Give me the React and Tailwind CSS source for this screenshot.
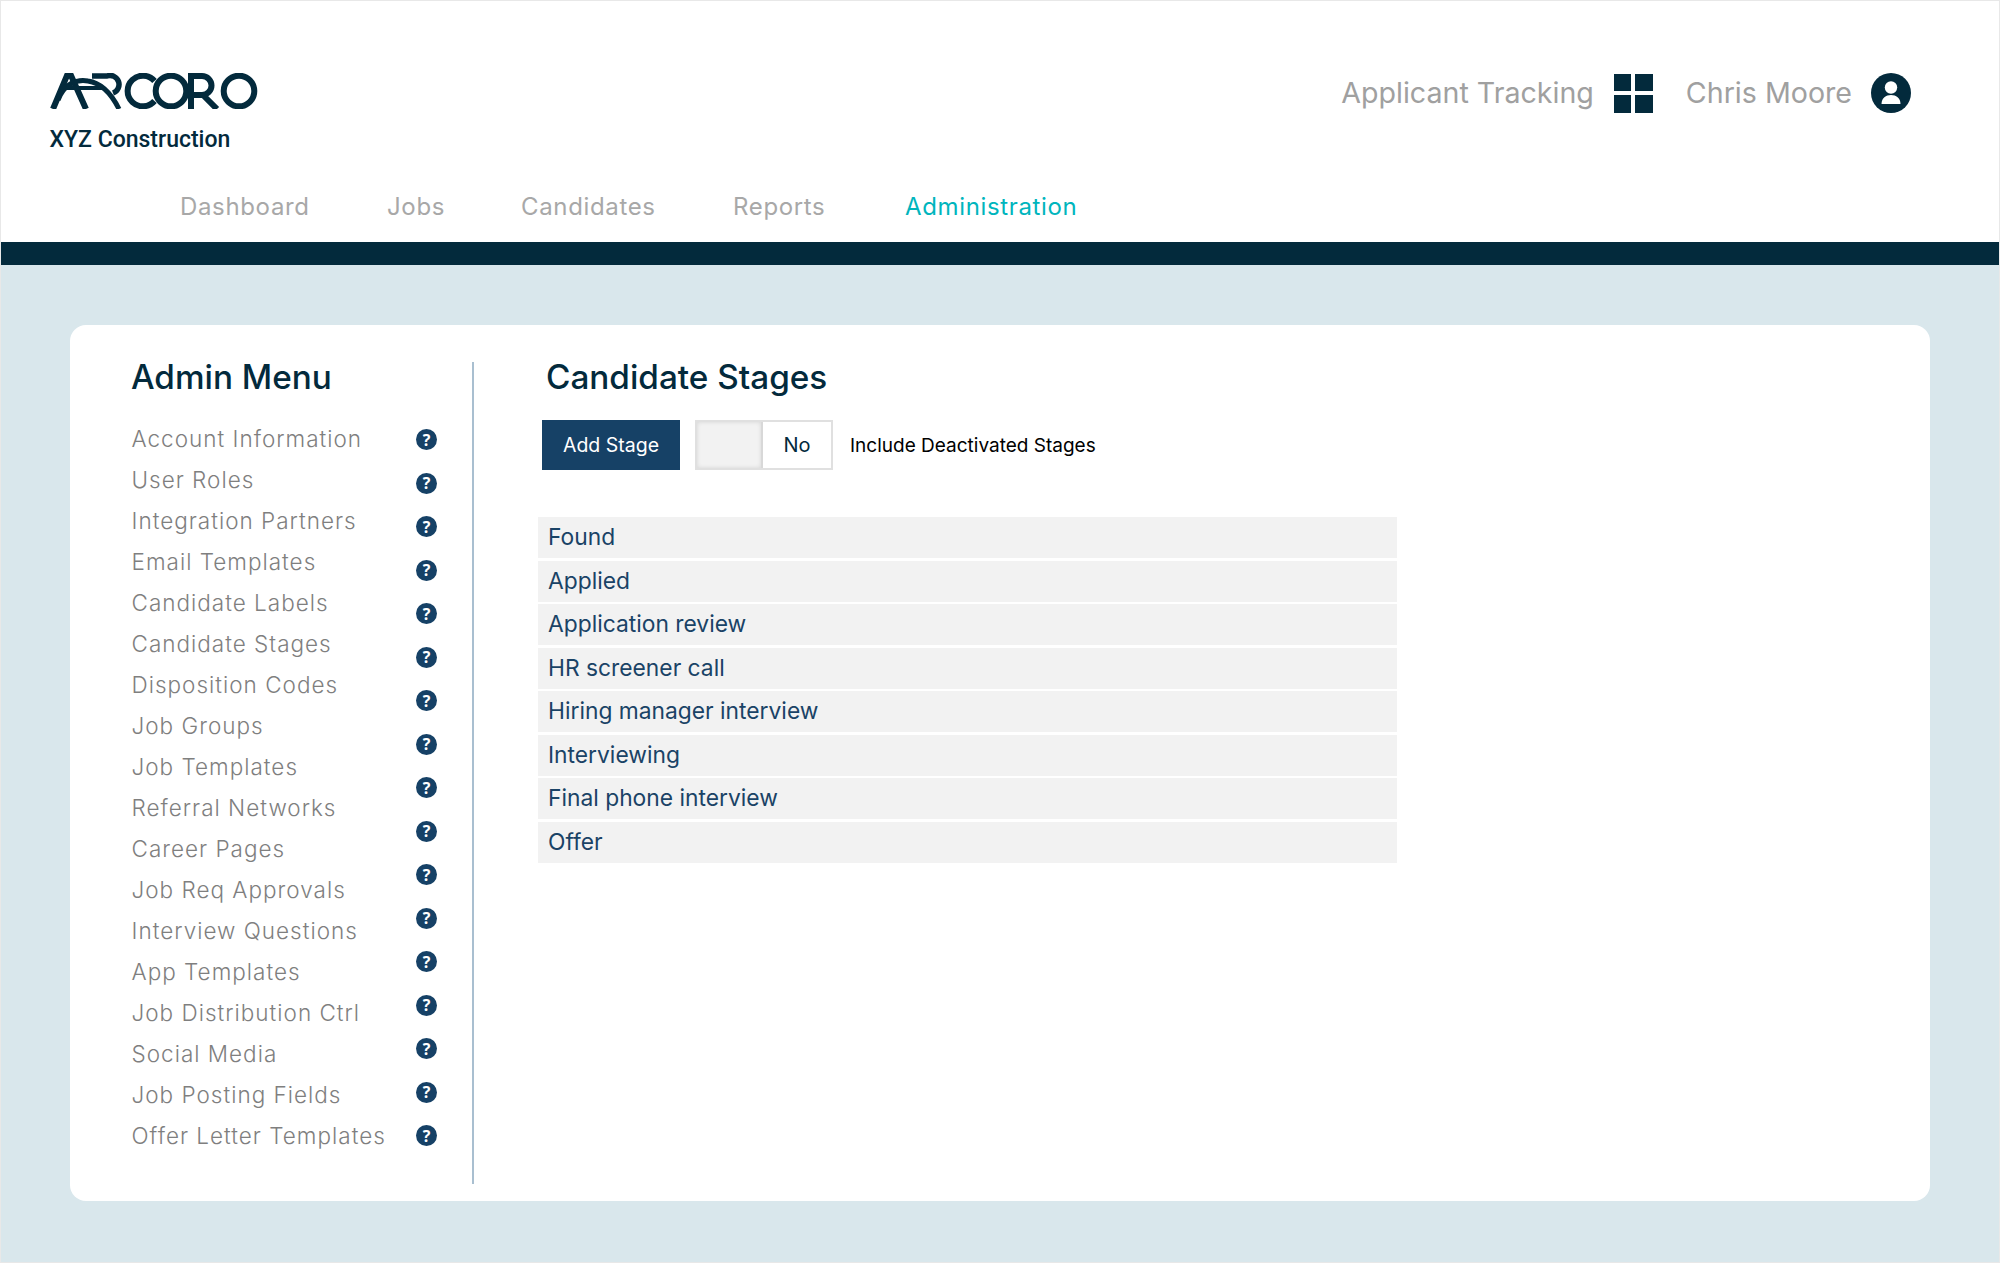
const menu = ["Account Information","User Roles","Integration Partners","Email Templates","Candidate Labels","Candidate Stages","Disposition Codes","Job Groups","Job Templates","Referral Networks","Career Pages","Job Req Approvals","Interview Questions","App Templates","Job Distribution Ctrl","Social Media","Job Posting Fields","Offer Letter Templates"];
const stages = ["Found","Applied","Application review","HR screener call","Hiring manager interview","Interviewing","Final phone interview","Offer"];
const nav = [["Dashboard","w-[207px]"],["Jobs","w-[134px]"],["Candidates","w-[212px]"],["Reports","w-[172px]"]];

function Logo() {
  return (
    <svg width="208" height="36" viewBox="0 0 208 36" fill="none" stroke="#032a3c" strokeWidth="6" aria-label="Arcoro">
      <path d="M3 36 L17 2.5 H21 L36 36" strokeWidth="6" />
      <path d="M13 15 H52" strokeWidth="4" />
      <path d="M8 27 C14 11 26 6 38 8 C52 10 62 22 69 36" strokeWidth="5" />
      <path d="M42 3 H57 A9 9 0 0 1 63 20" strokeWidth="5.5" />
      <path d="M104.5 8 A15.3 15.3 0 1 0 104.5 28" />
      <circle cx="121" cy="18" r="15.3" />
      <path d="M141 36 V3 H152 A9.5 9.5 0 0 1 152 22 H141 M152 21 L167 36" />
      <circle cx="189" cy="18" r="15.3" />
    </svg>
  );
}

function HelpDot() {
  return (
    <div className="w-[21px] h-[21px] rounded-full bg-[#164166] text-white flex items-center justify-center text-[16px] font-bold font-['Open_Sans',sans-serif] leading-none">?</div>
  );
}

export default function App() {
  return (
    <div className="w-[2000px] h-[1263px] overflow-hidden bg-[#d9e7ec] border border-[#e8e8e8] flex flex-col font-['Inter',sans-serif]">
      <header className="bg-white h-[241px] shrink-0 flex flex-col">
        <div className="flex justify-between pl-[48.5px] pr-[88px] pt-[72px]">
          <div className="flex flex-col">
            <Logo />
            <div className="mt-[18px] text-[23px] leading-[26px] font-medium text-[#032a3c] font-['Roboto',sans-serif]">XYZ Construction</div>
          </div>
          <div className="flex items-center h-[40px] text-[#a0a0a0] text-[28.6px]">
            <span>Applicant Tracking</span>
            <div className="ml-[20px] grid grid-cols-2 gap-[4px] w-[39px] h-[39px]">
              <i className="bg-[#032a3c]" /><i className="bg-[#032a3c]" /><i className="bg-[#032a3c]" /><i className="bg-[#032a3c]" />
            </div>
            <span className="ml-[33px]">Chris Moore</span>
            <div className="ml-[19px] w-[40px] h-[40px] rounded-full bg-[#032a3c] flex items-center justify-center">
              <svg width="26" height="28" viewBox="0 0 26 28" fill="#fff"><circle cx="13" cy="8.5" r="6.2" /><path d="M3.5 25 C3.5 19 8 16 13 16 S22.5 19 22.5 25 Z" /></svg>
            </div>
          </div>
        </div>
        <nav className="mt-auto pb-[19px] pl-[179px] flex text-[24px] leading-[32px] tracking-[0.65px] text-[#a8a8a8]">
          {nav.map(([n, w]) => <a key={n} className={w}>{n}</a>)}
          <a className="text-[#00b5bd]">Administration</a>
        </nav>
      </header>
      <div className="h-[23px] shrink-0 bg-[#032a3c]" />
      <main className="flex-1 pl-[69px] pr-[69px] pt-[60px]">
        <div className="h-[876px] bg-white rounded-[16px] flex pt-[37px] pl-[61px]">
          <aside className="w-[342.5px] h-[822px] border-r-2 border-[#a9bfd0] flex shrink-0">
            <div className="w-[285px]">
              <h2 className="text-[33.3px] leading-[30px] font-medium text-[#032a3c]">Admin Menu</h2>
              <ul className="mt-[25.5px] pl-[0.5px]">
                {menu.map(m => <li key={m} className="h-[41px] leading-[41px] text-[22.5px] font-light text-[#7f7f7f] tracking-[1px] whitespace-nowrap">{m}</li>)}
              </ul>
            </div>
            <div className="pt-[67px] flex flex-col gap-[22.5px]">
              {Array.from({ length: 17 }).map((_, i) => <HelpDot key={i} />)}
            </div>
          </aside>
          <section className="pl-[68.5px] flex-1">
            <h1 className="pl-[4px] text-[33.3px] leading-[30px] font-medium text-[#032a3c]">Candidate Stages</h1>
            <div className="mt-[28px] flex items-center h-[50px]">
              <button className="w-[138px] h-[50px] pt-[2px] bg-[#164166] text-white text-[19.5px]">Add Stage</button>
              <div className="ml-[15px] w-[138px] h-[50px] flex border-2 border-[#e0e0e0]">
                <div className="w-[66px] bg-[#f2f2f2] border-r-2 border-[#d8d8d8] shadow-[inset_0_0_4px_rgba(0,0,0,0.12)]" />
                <div className="flex-1 flex items-center justify-center text-[20px] text-[#032a3c]">No</div>
              </div>
              <span className="ml-[17px] pt-[2px] text-[19px] text-black">Include Deactivated Stages</span>
            </div>
            <div className="mt-[47px] -ml-[4px] w-[859px] flex flex-col gap-[2.5px]">
              {stages.map(s => <div key={s} className="h-[41px] leading-[39px] bg-[#f2f2f2] px-[10px] text-[22.8px] text-[#1a4366]">{s}</div>)}
            </div>
          </section>
        </div>
      </main>
    </div>
  );
}
